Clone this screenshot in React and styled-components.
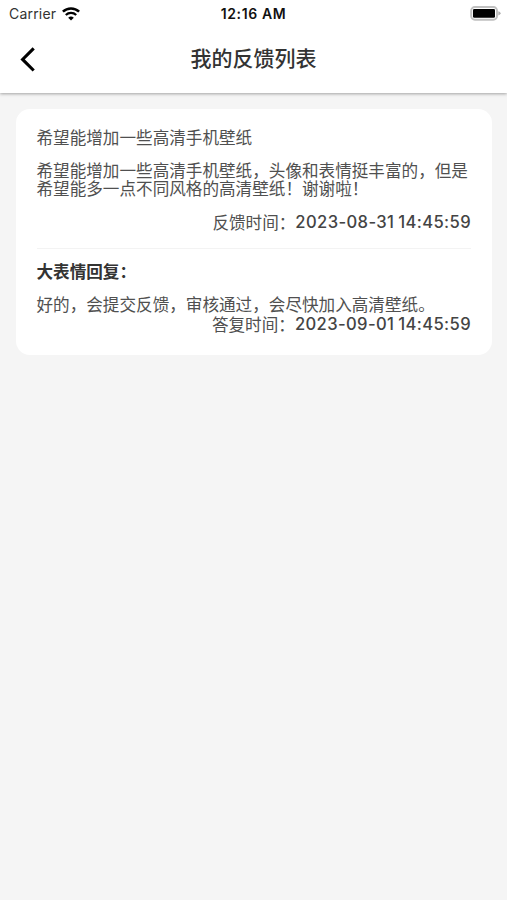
import React from 'react';
import styled, { createGlobalStyle } from 'styled-components';

export default class App extends React.Component {

    render() {
        return (
            <Page>
                <GlobalStyle />
                <Header>
                    <StatusBar>
                        <Carrier>
                            Carrier
                            <WifiIcon />
                        </Carrier>
                        <Clock>12:16 AM</Clock>
                        <Battery />
                    </StatusBar>
                    <NavBar>
                        <BackButton aria-label="返回">
                            <svg width="16" height="26" viewBox="0 0 16 26" fill="none" stroke="#000" strokeWidth="3.1">
                                <path d="M13.7 2.3 2.6 13.4 13.7 24.5" />
                            </svg>
                        </BackButton>
                        <Title>我的反馈列表</Title>
                    </NavBar>
                </Header>
                <Card>
                    <Text>希望能增加一些高清手机壁纸</Text>
                    <Text $top={15}>
                        希望能增加一些高清手机壁纸，头像和表情挺丰富的，但是希望能多一点不同风格的高清壁纸！谢谢啦！
                    </Text>
                    <TimeRow $top={15}>
                        反馈时间：<Time>2023-08-31 14:45:59</Time>
                    </TimeRow>
                    <Divider />
                    <ReplyTitle>大表情回复：</ReplyTitle>
                    <Text $top={15}>好的，会提交反馈，审核通过，会尽快加入高清壁纸。</Text>
                    <TimeRow $top={1}>
                        答复时间：<Time>2023-09-01 14:45:59</Time>
                    </TimeRow>
                </Card>
            </Page>
        );
    }
}

const WifiIcon = () => (
    <svg width="18" height="14" viewBox="0 0 18 14" fill="none" stroke="#000">
        <path d="M0.9 4.7C5.4 0.3 12.6 0.3 17.1 4.7" strokeWidth="2.5" />
        <path d="M3.8 8C6.7 5.1 11.3 5.1 14.2 8" strokeWidth="2.2" />
        <path d="M9 13.6 6.2 10.7Q9 8.5 11.8 10.7Z" fill="#000" stroke="none" />
    </svg>
);

const Battery = () => (
    <svg width="31" height="15" viewBox="0 0 31 15">
        <rect x="1.2" y="1.1" width="25.8" height="12.6" rx="3.6" fill="#fff" stroke="#c0c0c0" strokeWidth="2" />
        <rect x="3" y="2.9" width="22" height="8.9" rx="1.3" fill="#000" />
        <path d="M28.3 5.2Q30.6 5.8 30.6 7.3 30.6 8.8 28.3 9.4Z" fill="#b0b0b0" />
    </svg>
);

const GlobalStyle = createGlobalStyle`
    body {
        margin: 0;
        background: #f5f5f5;
        font-family: Inter, 'Noto Sans CJK SC', sans-serif;
    }
`;

const Page = styled.div`
    display: flex;
    flex-direction: column;
    min-height: 100vh;
    background: #f5f5f5;
`;

// header
const Header = styled.header`
    height: 93px;
    background: #fff;
    box-shadow: 0 1px 3px rgba(0, 0, 0, 0.34);
`;

const StatusBar = styled.div`
    display: grid;
    grid-template-columns: 1fr auto 1fr;
    align-items: center;
    height: 27px;
    padding: 0 6px;

    > svg {
        justify-self: end;
    }
`;

const Carrier = styled.div`
    display: flex;
    align-items: center;
    gap: 6px;
    padding-left: 3px;
    font-size: 14px;
    letter-spacing: 0.2px;
    color: #333;
`;

const Clock = styled.div`
    font-size: 14px;
    font-weight: 600;
    letter-spacing: 0.6px;
    color: #111;
`;

const NavBar = styled.div`
    display: grid;
    grid-template-columns: 60px 1fr 60px;
    align-items: center;
    height: 64px;
`;

const BackButton = styled.button`
    display: flex;
    padding: 0 0 0 20px;
    border: 0;
    background: none;
    cursor: pointer;
`;

const Title = styled.h1`
    margin: 0;
    text-align: center;
    font-size: 21px;
    font-weight: 500;
    line-height: 30px;
    color: #333;
`;

// feedback card
const Card = styled.section`
    box-sizing: border-box;
    height: 246px;
    margin: 16px 15px 0 16px;
    padding: 19px 21px 0 20.5px;
    border-radius: 14px;
    background: #fff;
`;

const Text = styled.p`
    margin: ${props => props.$top || 0}px 0 0;
    font-family: 'Noto Sans CJK SC', sans-serif;
    font-size: 16.6px;
    line-height: 18px;
    color: #505050;
`;

const TimeRow = styled(Text)`
    display: flex;
    justify-content: flex-end;
    line-height: 20px;
`;

const Time = styled.span`
    font-family: Inter, sans-serif;
    font-weight: 500;
    letter-spacing: 0.38px;
    word-spacing: -0.9px;
    color: #444;
`;

const Divider = styled.hr`
    height: 1px;
    margin: 16px 0 13px;
    border: 0;
    background: #f3f3f3;
`;

const ReplyTitle = styled(Text)`
    font-weight: 700;
    color: #333;
`;
